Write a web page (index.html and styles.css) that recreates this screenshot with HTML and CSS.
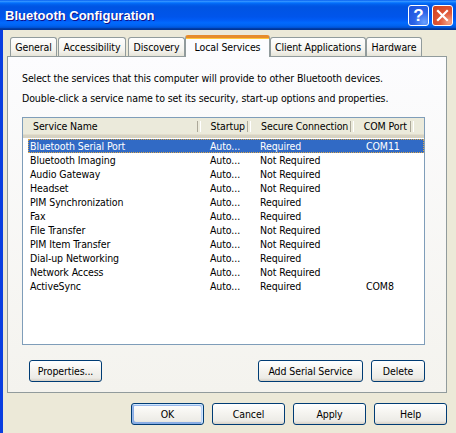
FILE: index.html
```html
<!DOCTYPE html>
<html>
<head>
<meta charset="utf-8">
<title>Bluetooth Configuration</title>
<link rel="stylesheet" href="styles.css">
</head>
<body>
<div class="window">
  <div class="titlebar">
    <span class="title">Bluetooth Configuration</span>
    <div class="controls">
      <button class="ctl ctl-help">?</button>
      <button class="ctl ctl-close"><svg width="13" height="13" viewBox="0 0 13 13"><path d="M2 2 L11 11 M11 2 L2 11" stroke="#fff" stroke-width="2.2" stroke-linecap="square"/></svg></button>
    </div>
  </div>
  <div class="frame">
    <div class="tabs">
      <div class="tab tab-general">General</div>
      <div class="tab tab-access">Accessibility</div>
      <div class="tab tab-disc">Discovery</div>
      <div class="tab tab-local active">Local Services</div>
      <div class="tab tab-client">Client Applications</div>
      <div class="tab tab-hw">Hardware</div>
    </div>
    <div class="panel">
      <p class="desc">Select the services that this computer will provide to other Bluetooth devices.</p>
      <p class="desc">Double-click a service name to set its security, start-up options and properties.</p>
      <div class="list">
        <div class="list-head">
          <div class="hcell h1">Service Name</div>
          <div class="hcell h2">Startup</div>
          <div class="hcell h3">Secure Connection</div>
          <div class="hcell h4">COM Port</div>
          <div class="hcell h5"></div>
        </div>
        <div class="list-body">
          <div class="row selected"><span class="c1">Bluetooth Serial Port</span><span class="c2">Auto...</span><span class="c3">Required</span><span class="c4">COM11</span></div>
          <div class="row"><span class="c1">Bluetooth Imaging</span><span class="c2">Auto...</span><span class="c3">Not Required</span><span class="c4"></span></div>
          <div class="row"><span class="c1">Audio Gateway</span><span class="c2">Auto...</span><span class="c3">Not Required</span><span class="c4"></span></div>
          <div class="row"><span class="c1">Headset</span><span class="c2">Auto...</span><span class="c3">Not Required</span><span class="c4"></span></div>
          <div class="row"><span class="c1">PIM Synchronization</span><span class="c2">Auto...</span><span class="c3">Required</span><span class="c4"></span></div>
          <div class="row"><span class="c1">Fax</span><span class="c2">Auto...</span><span class="c3">Required</span><span class="c4"></span></div>
          <div class="row"><span class="c1">File Transfer</span><span class="c2">Auto...</span><span class="c3">Not Required</span><span class="c4"></span></div>
          <div class="row"><span class="c1">PIM Item Transfer</span><span class="c2">Auto...</span><span class="c3">Not Required</span><span class="c4"></span></div>
          <div class="row"><span class="c1">Dial-up Networking</span><span class="c2">Auto...</span><span class="c3">Required</span><span class="c4"></span></div>
          <div class="row"><span class="c1">Network Access</span><span class="c2">Auto...</span><span class="c3">Not Required</span><span class="c4"></span></div>
          <div class="row"><span class="c1">ActiveSync</span><span class="c2">Auto...</span><span class="c3">Required</span><span class="c4">COM8</span></div>
        </div>
      </div>
      <div class="panel-actions">
        <button class="btn btn-props">Properties...</button>
        <div class="spacer"></div>
        <button class="btn btn-add">Add Serial Service</button>
        <button class="btn btn-del">Delete</button>
      </div>
    </div>
    <div class="dialog-actions">
      <button class="btn btn-dlg btn-default">OK</button>
      <button class="btn btn-dlg">Cancel</button>
      <button class="btn btn-dlg">Apply</button>
      <button class="btn btn-dlg">Help</button>
    </div>
  </div>
</div>
</body>
</html>
```
FILE: styles.css
```css
* { box-sizing: border-box; }
html, body { margin: 0; padding: 0; }
body {
  width: 456px;
  height: 433px;
  overflow: hidden;
  font-family: "DejaVu Sans Condensed", "Liberation Sans", Arial, sans-serif;
  font-stretch: condensed;
  font-size: 10.5px;
  letter-spacing: -0.1px;
  color: #000;
}
.window {
  width: 456px;
  height: 433px;
  background: #ece9d8;
  display: flex;
  flex-direction: column;
}
.titlebar {
  height: 30px;
  flex: none;
  display: flex;
  align-items: center;
  justify-content: space-between;
  padding: 0 3px 0 5px;
  background: linear-gradient(to bottom, #0058ee 0%, #3593ff 4%, #288eff 6%, #127dff 8%, #036ffc 10%, #0262ee 14%, #0057e5 20%, #0054e3 24%, #0055eb 56%, #005bf5 66%, #026afe 76%, #0062ef 86%, #0052d6 92%, #0040ab 94%, #003092 100%);
}
.title {
  color: #fff;
  font-family: "Liberation Sans", Arial, sans-serif;
  font-stretch: normal;
  font-weight: bold;
  font-size: 13px;
  letter-spacing: 0;
  text-shadow: 1px 1px #0f1089;
}
.controls { display: flex; gap: 3px; }
.ctl {
  width: 21px;
  height: 21px;
  border: 1px solid #fff;
  border-radius: 3px;
  padding: 0;
  display: flex;
  align-items: center;
  justify-content: center;
  color: #fff;
  font-family: "Liberation Sans", Arial, sans-serif;
  font-weight: bold;
  font-size: 17px;
  letter-spacing: 0;
  line-height: 1;
}
.ctl-help {
  background: radial-gradient(circle at 80% 85%, #6aa0ff 0%, #2a63e8 45%, #1a4fd9 100%);
}
.ctl-close {
  background: radial-gradient(circle at 85% 85%, #f4a58a 0%, #e0593a 40%, #cf3e1b 100%);
}
.frame {
  flex: 1;
  display: flex;
  flex-direction: column;
  border-left: 3px solid #0a3ee0;
  padding: 5px 9px 0 4px;
}
.tabs {
  display: flex;
  align-items: flex-end;
  height: 21px;
  padding-left: 3px;
  position: relative;
  z-index: 1;
}
.tab {
  height: 19px;
  border: 1px solid #919b9c;
  border-bottom: none;
  border-radius: 3px 3px 0 0;
  background: linear-gradient(to bottom, #fefefe, #f4f3ee 70%, #e6e4d8);
  display: flex;
  align-items: center;
  justify-content: center;
  white-space: nowrap;
}
.tab-general { width: 47px; }
.tab-access { width: 68px; margin-left: 1px; }
.tab-disc { width: 57px; margin-left: 2px; }
.tab-local { width: 85px; }
.tab-client { width: 96px; }
.tab-hw { width: 56px; }
.tab.active {
  height: 22px;
  margin-bottom: -1px;
  background: #fcfcfe;
  border-top: 3px solid #e68b2c;
  box-shadow: inset 0 1px 0 #ffc73c;
  padding-bottom: 2px;
}
.panel {
  width: 440px;
  border: 1px solid #919b9c;
  background: linear-gradient(to bottom, #fcfcfe, #f4f3ee);
  padding: 14px 21px 10px 14px;
  display: flex;
  flex-direction: column;
}
.desc {
  margin: 0 0 6px 0;
  line-height: 14px;
  white-space: nowrap;
}
.list {
  margin-top: 6px;
  width: 403px;
  height: 228px;
  border: 1px solid #7f9db9;
  background: #fff;
}
.list-head {
  display: flex;
  height: 20px;
  background: #ebeadb;
  border-bottom: 3px solid #d6d2c2;
  box-shadow: inset 0 -1px 0 #e2decd;
}
.hcell {
  position: relative;
  padding-left: 10px;
  line-height: 17px;
  white-space: nowrap;
}
.hcell::after {
  content: "";
  position: absolute;
  right: 0;
  top: 3px;
  bottom: 3px;
  width: 2px;
  border-left: 1px solid #aca899;
  border-right: 1px solid #fff;
}
.h1 { width: 180px; }
.h2 { width: 51px; }
.h3 { width: 104px; }
.h4 { width: 61px; }
.h5 { flex: 1; }
.h5::after { display: none; }
.list-body {
  padding: 1px 0 0 5px;
}
.row {
  display: grid;
  grid-template-columns: 175px 51px 104px 62px;
  height: 14px;
  line-height: 14px;
  white-space: nowrap;
}
.row span { overflow: hidden; }
.c1 { padding-left: 2px; }
.c2 { padding-left: 7px; }
.c3 { padding-left: 6px; }
.c4 { padding-left: 8px; }
.row.selected {
  background: #316ac5;
  color: #fff;
  outline: 1px dotted #d9a64a;
  outline-offset: -1px;
}
.panel-actions {
  display: flex;
  gap: 8px;
  margin-top: 15px;
  padding-left: 7px;
}
.spacer { flex: 1; }
.btn {
  height: 22px;
  border: 1px solid #003c74;
  border-radius: 3px;
  background: linear-gradient(to bottom, #ffffff 0%, #f6f5f1 40%, #ecebe6 85%, #d6d0c5 100%);
  font-family: inherit;
  font-stretch: condensed;
  font-size: 10.5px;
  letter-spacing: -0.1px;
  color: #000;
  padding: 0;
  white-space: nowrap;
}
.btn-props { width: 73px; }
.btn-add { width: 105px; }
.btn-del { width: 54px; }
.dialog-actions {
  display: flex;
  justify-content: flex-end;
  gap: 8px;
  margin-top: 10px;
}
.btn-dlg { width: 73px; }
.btn-default {
  box-shadow: inset -1px 1px #cee7ff, inset 1px 2px #98b8ea, inset -2px 2px #bcd4f6, inset 1px -1px #89ade4, inset 2px -2px #89ade4;
}
```
